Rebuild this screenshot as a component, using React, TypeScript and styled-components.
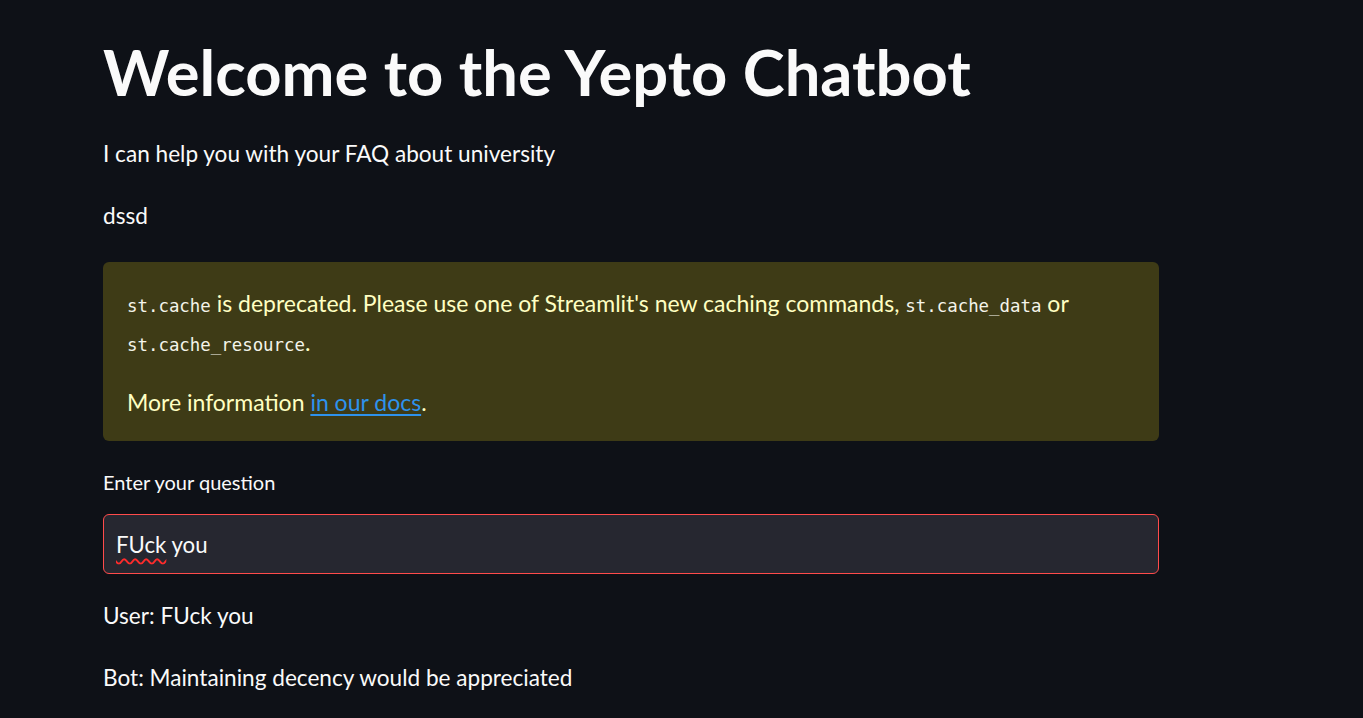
import React from "react";
import styled, { createGlobalStyle } from "styled-components";

const Global = createGlobalStyle`
  html, body { margin: 0; padding: 0; background: #0e1117; }
  body { font-family: Lato, "Noto Sans", sans-serif; color: #fafafa; }
  * { box-sizing: border-box; }
`;

const Page = styled.main`
  min-height: 718px;
  padding: 32px 0 0 103px;
  overflow: hidden;
`;

const Column = styled.div`
  width: 1056px;
  display: flex;
  flex-direction: column;
`;

const Title = styled.h1`
  margin: 0;
  font-size: 63.3px;
  font-weight: 700;
  line-height: 79px;
  color: #fafafa;
`;

const Text = styled.p<{ $top: number }>`
  margin: ${(p) => p.$top}px 0 0;
  font-size: 22.6px;
  line-height: 38px;
  color: #fafafa;
`;

const Alert = styled.div`
  margin-top: 27px;
  height: 179px;
  border-radius: 6px;
  background: #3e3b16;
  color: #ffffc2;
  padding: 23px 24px 0;
  font-size: 23px;
`;

const AlertLine = styled.p<{ $gap?: number }>`
  margin: ${(p) => p.$gap ?? 0}px 0 0;
  line-height: 36px;
`;

const Code = styled.code`
  font-family: "DejaVu Sans Mono", "Liberation Mono", monospace;
  font-size: 17.4px;
  color: #f4f4ea;
`;

const Link = styled.a`
  color: #2e92ec;
  text-decoration: underline;
  text-underline-offset: 3px;
`;

const Label = styled.label`
  margin-top: 26px;
  font-size: 20px;
  line-height: 30px;
  color: #fafafa;
`;

const Field = styled.div`
  margin-top: 17px;
  height: 60px;
  border: 1px solid #ff4b4b;
  border-radius: 6px;
  background: #262730;
  display: flex;
  align-items: center;
  padding: 0 12px;
  font-size: 22.2px;
  color: #fafafa;
`;

const Misspelled = styled.span`
  text-decoration: underline wavy #ff2b2b;
  text-decoration-thickness: 1.5px;
  text-underline-offset: 5px;
`;

export default function App() {
  return (
    <>
      <Global />
      <Page>
        <Column>
          <Title>Welcome to the Yepto Chatbot</Title>
          <Text $top={24}>I can help you with your FAQ about university</Text>
          <Text $top={24}>dssd</Text>
          <Alert>
            <AlertLine>
              <Code>st.cache</Code> is deprecated. Please use one of Streamlit's new caching commands,{" "}
              <Code>st.cache_data</Code> or <Code>st.cache_resource</Code>.
            </AlertLine>
            <AlertLine $gap={21}>
              More information <Link href="#">in our docs</Link>.
            </AlertLine>
          </Alert>
          <Label>Enter your question</Label>
          <Field>
            <Misspelled>FUck</Misspelled>&nbsp;you
          </Field>
          <Text $top={23}>User: FUck you</Text>
          <Text $top={24}>Bot: Maintaining decency would be appreciated</Text>
        </Column>
      </Page>
    </>
  );
}
